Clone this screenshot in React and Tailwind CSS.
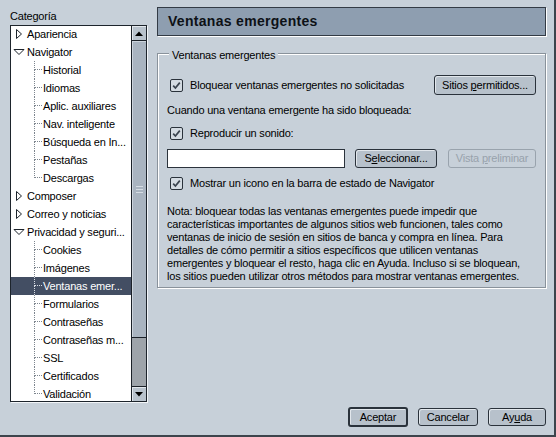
import React from 'react'

const tree = [
  { label: 'Apariencia', top: true, open: false },
  { label: 'Navigator', top: true, open: true },
  { label: 'Historial' },
  { label: 'Idiomas' },
  { label: 'Aplic. auxiliares' },
  { label: 'Nav. inteligente' },
  { label: 'Búsqueda en In...' },
  { label: 'Pestañas' },
  { label: 'Descargas', last: true },
  { label: 'Composer', top: true, open: false },
  { label: 'Correo y noticias', top: true, open: false },
  { label: 'Privacidad y seguri...', top: true, open: true },
  { label: 'Cookies' },
  { label: 'Imágenes' },
  { label: 'Ventanas emer...', selected: true },
  { label: 'Formularios' },
  { label: 'Contraseñas' },
  { label: 'Contraseñas m...' },
  { label: 'SSL' },
  { label: 'Certificados' },
  { label: 'Validación', last: true },
]

const Twisty = ({ open }) => (
  <svg width="12" height="12" viewBox="0 0 12 12" className="shrink-0">
    {open ? (
      <polygon points="1,3.5 11,3.5 6,8.5" fill="#fff" stroke="#1c232b" strokeWidth="1" strokeLinejoin="round" />
    ) : (
      <polygon points="3.5,1.5 8.5,6 3.5,10.5" fill="#fff" stroke="#1c232b" strokeWidth="1" strokeLinejoin="round" />
    )}
  </svg>
)

const TreeRow = ({ item }) => {
  if (item.top) {
    return (
      <div className="flex h-[18px] shrink-0 items-center gap-[2px] pl-[2px]">
        <Twisty open={item.open} />
        <span className="whitespace-nowrap leading-[18px]">{item.label}</span>
      </div>
    )
  }
  const line = item.selected ? 'border-[#d8dde4]' : 'border-[#7d858e]'
  return (
    <div className={`flex h-[18px] shrink-0 items-stretch ${item.selected ? 'bg-[#434e63] text-white' : ''}`}>
      <div className="w-[23px] shrink-0" />
      <div className="flex w-[8px] shrink-0 flex-col">
        <div className={`h-[9px] border-b border-l border-dotted ${line}`} />
        <div className={`flex-1 ${item.last ? '' : 'border-l border-dotted'} ${line}`} />
      </div>
      <span className="ml-[1px] whitespace-nowrap leading-[18px]">{item.label}</span>
    </div>
  )
}

const Scrollbar = () => (
  <div className="flex w-[15px] shrink-0 flex-col border-l border-[#1b2128]">
    <div className="flex h-[15px] shrink-0 items-center justify-center border-b border-[#1b2128] bg-[#b9c3cd] shadow-[inset_1px_1px_0_#e3e8ed]">
      <svg width="8" height="5" viewBox="0 0 8 5"><polygon points="0,5 4,0.5 8,5" fill="#000" /></svg>
    </div>
    <div className="flex h-[297px] shrink-0 flex-col items-center justify-center gap-[2px] border-b border-[#1b2128] bg-[#a9b4c0] shadow-[inset_1px_1px_0_#ccd4dc]">
      <div className="h-px w-[7px] bg-[#d6dde4]" />
      <div className="h-px w-[7px] bg-[#d6dde4]" />
      <div className="h-px w-[7px] bg-[#d6dde4]" />
    </div>
    <div className="flex-1 bg-[#9ea4aa]" />
    <div className="flex h-[15px] shrink-0 items-center justify-center border-t border-[#1b2128] bg-[#b9c3cd] shadow-[inset_1px_1px_0_#e3e8ed]">
      <svg width="8" height="5" viewBox="0 0 8 5"><polygon points="0,0 8,0 4,4.5" fill="#000" /></svg>
    </div>
  </div>
)

const Check = () => (
  <svg width="13" height="13" viewBox="0 0 13 13" className="shrink-0">
    <rect x="0.5" y="0.5" width="12" height="12" rx="1.5" fill="#d4dbe2" stroke="#2a323b" />
    <path d="M3.2 6.6 L5.4 9 L9.8 3.6" fill="none" stroke="#3a434e" strokeWidth="1.7" />
  </svg>
)

const CheckRow = ({ children, className = '' }) => (
  <div className={`flex h-[14px] items-center gap-[7px] pl-[3px] ${className}`}>
    <Check />
    <span className="whitespace-nowrap leading-[14px]">{children}</span>
  </div>
)

const Btn = ({ children, className = '', disabled }) => (
  <div
    className={`flex items-center justify-center rounded-[3px] border whitespace-nowrap ${
      disabled
        ? 'border-[#99a3ad] text-[#98a2ac]'
        : 'border-[#2a323b] bg-[#b7c1cb] shadow-[inset_1px_1px_0_#e2e7ec]'
    } ${className}`}
  >
    {children}
  </div>
)

export default function App() {
  return (
    <div className="flex h-[437px] w-[556px] flex-col overflow-hidden border-b-2 border-r-2 border-[#3d444c] bg-[#c7d0d9] pt-[7px] font-['Liberation_Sans',Arial,sans-serif] text-[11px] tracking-[-0.2px] text-black">
      <div className="flex">
        {/* left: category tree */}
        <div className="ml-[10px] flex w-[137px] flex-col">
          <div className="h-[18px] leading-[18px]">Categoría</div>
          <div className="flex h-[377px] overflow-hidden border border-[#1d242c] shadow-[1px_1px_0_#f2f5f8]">
            <div className="flex flex-1 flex-col overflow-hidden bg-white">
              <div className="-mt-px flex flex-col">
                {tree.map((item) => (
                  <TreeRow key={item.label} item={item} />
                ))}
              </div>
            </div>
            <Scrollbar />
          </div>
        </div>

        {/* right: panel */}
        <div className="ml-[10px] flex w-[389px] flex-col">
          <div className="flex h-[29px] items-center border border-[#333b45] bg-[#8e9eb0] pl-[10px] text-[14px] font-bold tracking-[0.3px] text-[#0d1116] shadow-[1px_1px_0_#fff]">
            Ventanas emergentes
          </div>

          <div className="relative mt-[17px] flex h-[235px] flex-col border border-[#89929b] px-[9px] shadow-[inset_1px_1px_0_#fff,1px_1px_0_#fff]">
            <span className="absolute left-[11px] top-[-6px] bg-[#c7d0d9] px-[3px] leading-[14px]">Ventanas emergentes</span>

            <div className="mt-[21px] flex h-[20px] items-center justify-between">
              <CheckRow>Bloquear ventanas emergentes no solicitadas</CheckRow>
              <Btn className="h-[20px] w-[102px]">
                Sitios&nbsp;<span className="underline">p</span>ermitidos...
              </Btn>
            </div>

            <div className="mt-[8px] h-[14px] whitespace-nowrap leading-[14px]">Cuando una ventana emergente ha sido bloqueada:</div>

            <CheckRow className="mt-[9px]">Reproducir un sonido:</CheckRow>

            <div className="mt-[9px] flex h-[19px]">
              <div className="w-[178px] border border-[#2b333c] bg-white" />
              <Btn className="ml-[10px] w-[82px]">
                S<span className="underline">e</span>leccionar...
              </Btn>
              <Btn disabled className="ml-[11px] w-[88px]">
                Vista&nbsp;<span className="underline">p</span>reliminar
              </Btn>
            </div>

            <CheckRow className="mt-[8px]">Mostrar un icono en la barra de estado de Navigator</CheckRow>

            <p className="mt-[15px] whitespace-nowrap leading-[13px]">
              Nota: bloquear todas las ventanas emergentes puede impedir que
              <br />
              características importantes de algunos sitios web funcionen, tales como
              <br />
              ventanas de inicio de sesión en sitios de banca y compra en línea. Para
              <br />
              detalles de cómo permitir a sitios específicos que utilicen ventanas
              <br />
              emergentes y bloquear el resto, haga clic en Ayuda. Incluso si se bloquean,
              <br />
              los sitios pueden utilizar otros métodos para mostrar ventanas emergentes.
            </p>
          </div>
        </div>
      </div>

      {/* dialog buttons */}
      <div className="mt-[5px] flex items-center justify-end gap-[10px] pr-[8px]">
        <Btn className="h-[20px] w-[60px] border-2 border-[#0c1014]">Aceptar</Btn>
        <Btn className="h-[18px] w-[60px]">Cancelar</Btn>
        <Btn className="h-[18px] w-[58px]">
          Ay<span className="underline">u</span>da
        </Btn>
      </div>
    </div>
  )
}
